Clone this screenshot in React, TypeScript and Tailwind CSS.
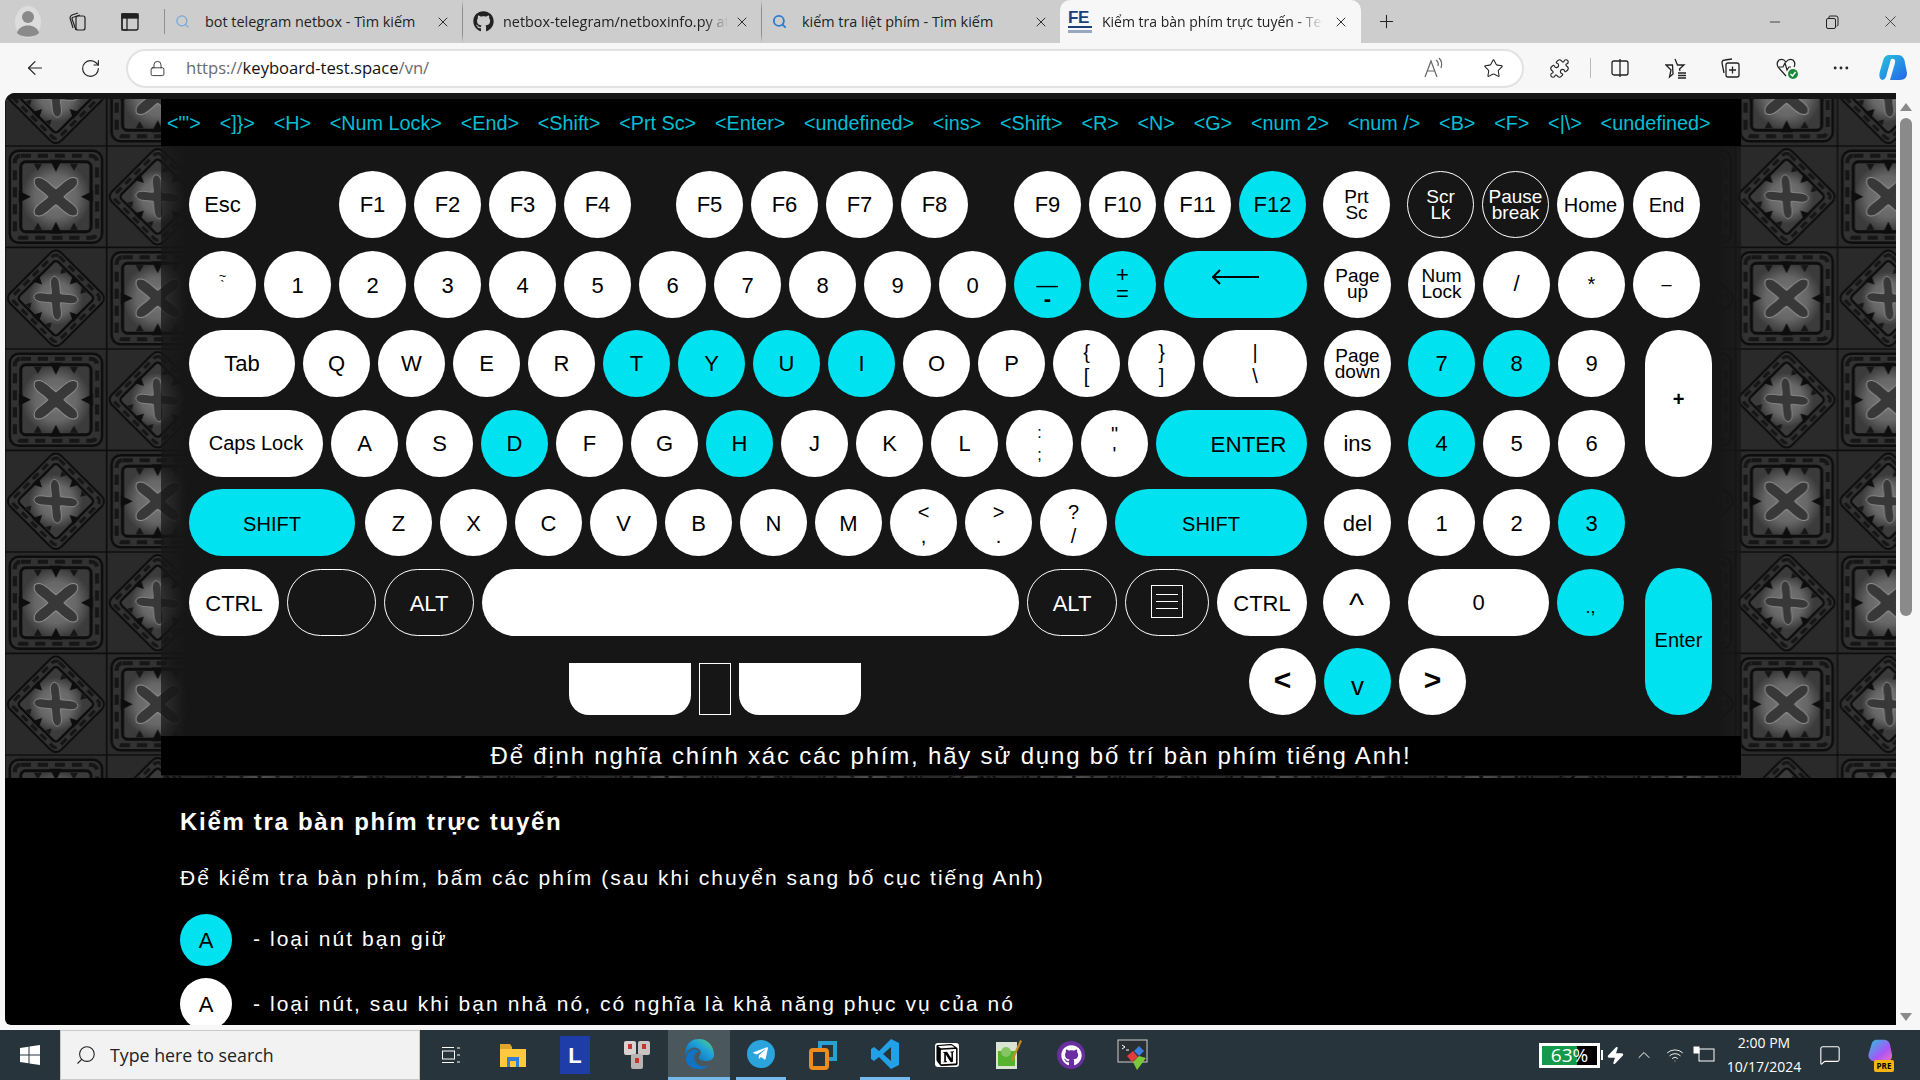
import { FC, ReactNode } from 'react'
import {
  ArrowLeft,
  RotateCw,
  Lock,
  Star,
  Puzzle,
  Plus,
  X,
  Minus,
  Search,
  Ellipsis,
  ChevronUp,
  Wifi,
  MessageSquare,
  Zap,
} from 'lucide-react'
import { FaGithub, FaTelegramPlane } from 'react-icons/fa'
import { SiNotion } from 'react-icons/si'

// key cap
const Key: FC<{
  children?: ReactNode
  w?: string
  h?: string
  on?: boolean
  line?: boolean
  text?: string
}> = ({ children, w = 'w-[67px]', h = 'h-[67px]', on, line, text = 'text-[22px]' }) => (
  <div
    className={`${w} ${h} shrink-0 rounded-[34px] flex items-center justify-center text-center ${text} leading-none ${
      line
        ? 'border border-white text-white'
        : on
          ? 'bg-[#00e2f0] text-black'
          : 'bg-white text-black'
    }`}
  >
    {children}
  </div>
)

// two symbols on one key
const Two: FC<{ a: string; b: string; gap?: string; text?: string }> = ({
  a,
  b,
  gap = 'leading-[24px]',
  text = 'text-[20px]',
}) => (
  <div className={`flex flex-col items-center ${gap} ${text}`}>
    <span>{a}</span>
    <span>{b}</span>
  </div>
)

// two-line word keys such as Page up
const Word: FC<{ a: string; b: string }> = ({ a, b }) => (
  <div className="flex flex-col items-center leading-[16px] text-[19px]">
    <span>{a}</span>
    <span>{b}</span>
  </div>
)

const Row: FC<{ children: ReactNode; className?: string }> = ({ children, className = '' }) => (
  <div className={`flex gap-[8px] h-[67px] ${className}`}>{children}</div>
)

const Gap: FC<{ w: string }> = ({ w }) => <div className={`${w} shrink-0`} />

const Plain: FC<{ labels: string[]; on?: string[] }> = ({ labels, on = [] }) => (
  <>
    {labels.map((l) => (
      <Key key={l} on={on.includes(l)}>
        {l}
      </Key>
    ))}
  </>
)

const logWords = [
  '<"\'>', '<]}>', '<H>', '<Num Lock>', '<End>', '<Shift>', '<Prt Sc>', '<Enter>', '<undefined>', '<ins>',
  '<Shift>', '<R>', '<N>', '<G>', '<num 2>', '<num />', '<B>', '<F>', '<|\\>', '<undefined>',
  '<Tab>', '<Tab>', '<l>', '<F>', '<Tab>', '<Tab>', '<Tab>', '<Shift>', '<N>', '<Tab>', '<Tab>', '<L>',
]

// tile drawn behind the keyboard
const Motif: FC<{ x: number; y: number; plus?: boolean }> = ({ x, y, plus }) => (
  <g transform={`translate(${x} ${y})`}>
    <rect x="-50.75" y="-50.75" width="101.5" height="101.5" fill="#2b2b2b" />
    <rect x="-50.75" y="-50.75" width="101.5" height="101.5" fill="none" stroke="#111" strokeWidth="1.5" />
    <g transform={plus ? 'rotate(45) scale(0.78)' : ''}>
      <rect x="-46" y="-46" width="92" height="92" rx="9" fill="#303030" stroke="#0e0e0e" strokeWidth="2.5" />
      <rect x="-41" y="-41" width="82" height="82" rx="6" fill="none" stroke="#151515" strokeWidth="4" strokeDasharray="10 7" />
      <rect x="-35" y="-35" width="70" height="70" rx="5" fill="url(#glow)" stroke="#0e0e0e" strokeWidth="3" />
      <path d="M-6,-37 L0,-25 L6,-37Z M-6,37 L0,25 L6,37Z M-37,-6 L-25,0 L-37,6Z M37,-6 L25,0 L37,6Z" fill="#0e0e0e" />
      <path d="M-22,-33 L-18,-26 L-14,-33Z M22,-33 L18,-26 L14,-33Z M-22,33 L-18,26 L-14,33Z M22,33 L18,26 L14,33Z" fill="#151515" />
    </g>
    <path
      d="M-21,-18 C-14,-23 -6,-12 0,-8 C6,-12 14,-23 21,-18 C25,-10 12,-5 8,0 C12,5 25,10 21,18 C14,23 6,12 0,8 C-6,12 -14,23 -21,18 C-25,10 -12,5 -8,0 C-12,-5 -25,-10 -21,-18Z"
      transform={plus ? 'rotate(45) scale(0.8)' : ''}
      fill="#373737"
      stroke="#8f8f8f"
      strokeWidth="1"
    />
  </g>
)

const Wallpaper: FC = () => (
  <svg className="w-full h-full [grid-area:1/1]" aria-hidden>
    <defs>
      <radialGradient id="glow">
        <stop offset="0" stopColor="#7a7a7a" />
        <stop offset="0.6" stopColor="#666" />
        <stop offset="1" stopColor="#3a3a3a" />
      </radialGradient>
      <filter id="soft">
        <feGaussianBlur stdDeviation="0.5" />
      </filter>
      <pattern id="tile" width="203" height="203" patternUnits="userSpaceOnUse" patternTransform="translate(0 47) scale(1.003 1)">
        <g filter="url(#soft)">
          <Motif x={50.75} y={50.75} />
          <Motif x={152.25} y={50.75} plus />
          <Motif x={50.75} y={152.25} plus />
          <Motif x={152.25} y={152.25} />
        </g>
      </pattern>
    </defs>
    <rect width="100%" height="100%" fill="url(#tile)" />
  </svg>
)

const Keyboard: FC = () => (
  <div className="flex pt-[25px] pl-[28px] pb-[22px] h-[591px]">
    <div className="flex flex-col gap-[12.5px] w-[1435px] shrink-0">
      <Row>
        <Key>Esc</Key>
        <Gap w="w-[67px]" />
        <Plain labels={['F1', 'F2', 'F3', 'F4']} />
        <Gap w="w-[29px]" />
        <Plain labels={['F5', 'F6', 'F7', 'F8']} />
        <Gap w="w-[30px]" />
        <Plain labels={['F9', 'F10', 'F11', 'F12']} on={['F12']} />
        <Gap w="w-px" />
        <Key><Word a="Prt" b="Sc" /></Key>
        <Gap w="w-px" />
        <Key line><Word a="Scr" b="Lk" /></Key>
        <Key line><Word a="Pause" b="break" /></Key>
        <Key text="text-[20px]">Home</Key>
      </Row>
      <Row>
        <Key><Two a="~" b="`" gap="leading-[10px] -mt-[6px]" text="text-[13px]" /></Key>
        <div className="flex gap-[8px] [&>div]:pt-[3px]">
          <Plain labels={['1', '2', '3', '4', '5', '6', '7', '8', '9', '0']} />
        </div>
        <Key on>
          <div className="flex flex-col items-center leading-[23px] pt-[6px] font-bold text-[22px]">
            <span className="scale-x-[1.7] font-normal">_</span>
            <span>-</span>
          </div>
        </Key>
        <Key on><Two a="+" b="=" gap="leading-[19px]" text="text-[22px]" /></Key>
        <Key w="w-[143px]" on>
          <svg width="48" height="16" viewBox="0 0 48 16" className="-mt-[14px]" fill="none" stroke="black" strokeWidth="2">
            <path d="M1 8 H47" />
            <path d="M8 1 L1 8 L8 15" />
          </svg>
        </Key>
        <Gap w="w-px" />
        <Key><Word a="Page" b="up" /></Key>
        <Gap w="w-px" />
        <Key><Word a="Num" b="Lock" /></Key>
        <Key text="text-[22px]">/</Key>
        <Key text="text-[20px]">*</Key>
      </Row>
      <Row>
        <Key w="w-[106px]">Tab</Key>
        <Plain labels={['Q', 'W', 'E', 'R', 'T', 'Y', 'U', 'I', 'O', 'P']} on={['T', 'Y', 'U', 'I']} />
        <Key><Two a="{" b="[" /></Key>
        <Key><Two a="}" b="]" /></Key>
        <Key w="w-[104px]"><Two a="|" b="\" /></Key>
        <Gap w="w-px" />
        <Key><Word a="Page" b="down" /></Key>
        <Gap w="w-px" />
        <Plain labels={['7', '8', '9']} on={['7', '8']} />
      </Row>
      <Row className="[&>div]:pt-[2px]">
        <Key w="w-[134px]" text="text-[20px]"><span className="-mt-[3px]">Caps Lock</span></Key>
        <Plain labels={['A', 'S', 'D', 'F', 'G', 'H', 'J', 'K', 'L']} on={['D', 'H']} />
        <Key><Two a=":" b=";" gap="leading-[22px]" text="text-[16px]" /></Key>
        <Key><Two a={'"'} b="'" gap="leading-[20px]" /></Key>
        <Key w="w-[151px]" on text="text-[22.4px]"><span className="pl-[34px] pt-[2px]">ENTER</span></Key>
        <Gap w="w-px" />
        <Key>ins</Key>
        <Gap w="w-px" />
        <Plain labels={['4', '5', '6']} on={['4']} />
      </Row>
      <Row className="[&>div]:pt-[2px]">
        <Key w="w-[166px]" on text="text-[20px]">SHIFT</Key>
        <div className="w-0 -ml-[6px]" />
        <Plain labels={['Z', 'X', 'C', 'V', 'B', 'N', 'M']} />
        <Key><Two a="<" b="," /></Key>
        <Key><Two a=">" b="." /></Key>
        <Key><Two a="?" b="/" /></Key>
        <Key w="w-[192px]" on text="text-[20px]">SHIFT</Key>
        <Gap w="w-px" />
        <Key>del</Key>
        <Gap w="w-px" />
        <Plain labels={['1', '2', '3']} on={['3']} />
      </Row>
      <Row>
        <Key w="w-[90px]"><span className="pt-[3px]">CTRL</span></Key>
        <Key w="w-[89px]" line />
        <Key w="w-[90px]" line><span className="pt-[3px]">ALT</span></Key>
        <Key w="w-[537px]" />
        <Key w="w-[90px]" line><span className="pt-[3px]">ALT</span></Key>
        <Key w="w-[84px]" line>
          <div className="w-[32px] h-[33px] border border-white flex flex-col justify-evenly px-[4px] py-[2px] -mt-[2px]">
            <div className="h-px bg-white" />
            <div className="h-px bg-white" />
            <div className="h-px bg-white" />
          </div>
        </Key>
        <Key w="w-[90px]"><span className="pt-[3px]">CTRL</span></Key>
        <Gap w="w-0" />
        <Key text="text-[32px]"><span className="pt-[4px]">^</span></Key>
        <Gap w="w-[2px]" />
        <Key w="w-[141px]"><span className="pt-[2px]">0</span></Key>
        <Key on text="text-[18px]"><span className="pt-[10px]">.,</span></Key>
      </Row>
      <div className="flex h-[67px] items-end">
        <div className="w-[122px] h-[52px] bg-white rounded-b-[20px] ml-[380px]" />
        <div className="w-[32px] h-[52px] border border-white ml-[8px]" />
        <div className="w-[122px] h-[52px] bg-white rounded-b-[20px] ml-[8px]" />
        <div className="flex gap-[8px] ml-[388px]">
          <Key text="text-[30px]"><span className="-mt-[4px] font-bold">&lt;</span></Key>
          <Key on text="text-[26px]"><span className="pt-[8px]">v</span></Key>
          <Key text="text-[30px]"><span className="-mt-[4px] font-bold">&gt;</span></Key>
        </div>
      </div>
    </div>
    <div className="flex flex-col gap-[12.5px] ml-[9px]">
      <Key text="text-[20px]">End</Key>
      <Key text="text-[18px]">–</Key>
      <div className="pl-[12px]">
        <Key h="h-[147px]" text="text-[20px]"><span className="-mt-[10px] font-bold">+</span></Key>
      </div>
      <div className="h-[67px]" />
      <div className="pl-[12px]">
        <Key h="h-[147px]" on text="text-[20px]"><span className="-mt-[4px]">Enter</span></Key>
      </div>
    </div>
  </div>
)

const TestPage: FC = () => (
  <div className="flex-1 min-w-0 bg-black rounded-tl-[10px] rounded-bl-[6px] overflow-hidden font-['Liberation_Sans',sans-serif]">
    <div className="h-[6px] bg-[#141414]" />
    <div className="grid h-[679px]">
      <Wallpaper />
      <div className="[grid-area:1/1] z-10 ml-[156px] w-[1580px] h-[677px] flex flex-col bg-[linear-gradient(to_right,rgba(22,22,22,0.72),#161616_26px,#161616_1554px,rgba(22,22,22,0.72))]">
        <div className="h-[47px] bg-black overflow-hidden px-[6px] pt-[13px] flex flex-wrap content-start gap-x-[18.75px] gap-y-[11px] text-[19.8px] leading-[22px] text-[#00bfd6]">
          {logWords.map((w, i) => (
            <span key={i}>{w}</span>
          ))}
        </div>
        <Keyboard />
        <div className="h-[39px] bg-black flex items-center justify-center text-white text-[24px] tracking-[1.8px] -mt-px">
          Để định nghĩa chính xác các phím, hãy sử dụng bố trí bàn phím tiếng Anh!
        </div>
      </div>
    </div>
    <div className="pl-[175px] text-white">
      <h2 className="text-[24px] font-bold tracking-[1.7px] leading-[26px] mt-[31px]">Kiểm tra bàn phím trực tuyến</h2>
      <p className="text-[21px] tracking-[2.03px] leading-[24px] mt-[31px]">
        Để kiểm tra bàn phím, bấm các phím (sau khi chuyển sang bố cục tiếng Anh)
      </p>
      <div className="flex items-center gap-[21px] mt-[24px]">
        <div className="w-[52px] h-[52px] rounded-full bg-[#00e2f0] text-black flex items-center justify-center text-[22px]">A</div>
        <span className="text-[21px] tracking-[2.05px] -mt-[2px]">- loại nút bạn giữ</span>
      </div>
      <div className="flex items-center gap-[21px] mt-[12px]">
        <div className="w-[52px] h-[52px] rounded-full bg-white text-black flex items-center justify-center text-[22px]">A</div>
        <span className="text-[21px] tracking-[2.05px]">- loại nút, sau khi bạn nhả nó, có nghĩa là khả năng phục vụ của nó</span>
      </div>
    </div>
  </div>
)

const Scrollbar: FC = () => (
  <div className="w-[24px] shrink-0 flex flex-col items-center pr-[5px] pt-[10px] gap-[4px]">
    <div className="w-0 h-0 border-x-[6px] border-x-transparent border-b-[8px] border-b-[#8a8a8a]" />
    <div className="w-[12px] h-[498px] rounded-[6px] bg-[#8a8a8a] mt-[3px]" />
    <div className="flex-1" />
    <div className="w-0 h-0 border-x-[6px] border-x-transparent border-t-[8px] border-t-[#8a8a8a] mb-[4px]" />
  </div>
)

const Tab: FC<{ icon: ReactNode; label: string; w: string; fade?: boolean }> = ({ icon, label, w, fade }) => (
  <div className={`${w} h-[43px] flex items-center border-r border-[#8f8f8f] border-y-[9px] border-y-[#cdcdcd] pl-[10px] pr-[11px] shrink-0`}>
    <div className="w-[24px] flex justify-start shrink-0">{icon}</div>
    <span className={`flex-1 min-w-0 pl-[6px] overflow-hidden whitespace-nowrap text-[14.4px] text-[#222] ${fade ? '[mask-image:linear-gradient(to_right,black_90%,transparent)]' : ''}`}>
      {label}
    </span>
    <X size={16} strokeWidth={1.4} className={`${fade ? 'ml-[6px]' : 'ml-[14px]'} shrink-0 text-[#222]`} />
  </div>
)

const TabStrip: FC = () => (
  <div className="h-[43px] bg-[#cdcdcd] flex items-center font-['Open_Sans',sans-serif]">
    <div className="w-[164px] flex items-center pl-[14px] shrink-0">
      <svg width="28" height="34" viewBox="0 0 28 34">
        <ellipse cx="14" cy="17" rx="13" ry="16" fill="#dcdcdc" />
        <circle cx="14" cy="12" r="6" fill="#8a8a8a" />
        <path d="M3 28 C5 18 23 18 25 28 C20 33 8 33 3 28Z" fill="#8a8a8a" />
      </svg>
      <svg width="20" height="22" viewBox="0 0 20 22" fill="none" stroke="#222" strokeWidth="1.2" className="ml-[25px]">
        <rect x="9" y="5" width="9" height="14" rx="2" />
        <path d="M6 17 L3 7 Q3 5 5 4 L11 2" />
        <path d="M9 19 L5 8 Q5 6 7 6 L13 4" />
      </svg>
      <svg width="20" height="20" viewBox="0 0 20 20" fill="none" stroke="#222" strokeWidth="1.3" className="ml-[33px]">
        <rect x="2" y="2" width="16" height="16" rx="2" />
        <rect x="2" y="2" width="16" height="4" fill="#222" />
        <rect x="2" y="2" width="5" height="16" fill="none" />
      </svg>
    </div>
    <div className="w-px h-[25px] bg-[#8f8f8f] shrink-0" />
    <Tab w="w-[298px]" label="bot telegram netbox - Tìm kiếm" icon={<Search size={15} className="text-[#74a9d8]" />} />
    <Tab w="w-[299px]" fade label="netbox-telegram/netboxinfo.py at main" icon={<FaGithub size={21} className="text-[#222]" />} />
    <div className="w-[298px] h-[43px] flex items-center pl-[10px] pr-[11px] shrink-0">
      <div className="w-[24px] shrink-0"><Search size={15} strokeWidth={3} className="text-[#2b7cd3]" /></div>
      <span className="flex-1 pl-[6px] text-[14.4px] text-[#222] whitespace-nowrap overflow-hidden">kiểm tra liệt phím - Tìm kiếm</span>
      <X size={16} strokeWidth={1.4} className="ml-[14px] shrink-0 text-[#222]" />
    </div>
    <div className="w-[301px] h-[43px] bg-[#f7f7f7] rounded-t-[10px] flex items-center pl-[8px] pr-[12px] shrink-0">
      <div className="w-[24px] shrink-0 flex flex-col text-[#1d3f7a] font-['Liberation_Sans',sans-serif]">
        <span className="text-[17px] font-bold leading-[15px] tracking-[-0.5px]">FE</span>
        <div className="h-[2px] bg-[#1d3f7a] mt-[1px]" />
        <div className="h-[3px] bg-[#9aa7c0] mt-[2px]" />
      </div>
      <span className="flex-1 min-w-0 pl-[10px] text-[14px] text-[#222] whitespace-nowrap overflow-hidden [mask-image:linear-gradient(to_right,black_88%,transparent)]">
        Kiểm tra bàn phím trực tuyến - Test
      </span>
      <X size={16} strokeWidth={1.4} className="ml-[10px] shrink-0 text-[#222]" />
    </div>
    <Plus size={21} strokeWidth={1.2} className="ml-[15px] text-[#222]" />
    <div className="flex-1" />
    <Minus size={16} strokeWidth={1.2} className="text-[#222]" />
    <svg width="14" height="14" viewBox="0 0 14 14" fill="none" stroke="#222" className="ml-[42px]">
      <rect x="1.5" y="3.5" width="9" height="10" rx="1.5" />
      <path d="M4 3 V2 Q4 1 5 1 H11 Q13 1 13 3 V10 Q13 11 11.5 11" />
    </svg>
    <X size={19} strokeWidth={1} className="ml-[42px] mr-[20px] text-[#222]" />
  </div>
)

const Toolbar: FC = () => (
  <div className="h-[50px] bg-[#f7f7f7] flex items-center font-['Open_Sans',sans-serif] text-[#222]">
    <ArrowLeft size={22} strokeWidth={1.3} className="ml-[24px]" />
    <RotateCw size={21} strokeWidth={1.3} className="ml-[34px]" />
    <div className="ml-[25px] w-[1398px] h-[39px] bg-white border-2 border-[#e2e2e2] rounded-[20px] flex items-center pl-[21px] pr-[18px]">
      <Lock size={17} strokeWidth={1.2} />
      <span className="ml-[20px] text-[16.6px] text-[#6a6a6a]">
        https://<span className="text-[#111]">keyboard-test.space</span>/vn/
      </span>
      <div className="flex-1" />
      <svg width="22" height="22" viewBox="0 0 22 22" fill="none" stroke="#666" strokeWidth="1.2" className="mr-[38px]">
        <path d="M2 20 L8 4 L14 20 M4.5 14 H11.5" />
        <path d="M13 3 Q16 5 15 9 M16 1 Q20 5 18 11" />
      </svg>
      <Star size={21} strokeWidth={1.2} />
    </div>
    <Puzzle size={21} strokeWidth={1.3} className="ml-[25px]" />
    <div className="w-px h-[20px] bg-[#bbb] ml-[20px]" />
    <svg width="20" height="20" viewBox="0 0 20 20" fill="none" stroke="#222" strokeWidth="1.3" className="ml-[19px]">
      <rect x="2" y="3" width="16" height="14" rx="2" />
      <path d="M10 1 V19" />
    </svg>
    <svg width="22" height="22" viewBox="0 0 22 22" fill="none" stroke="#222" strokeWidth="1.3" className="ml-[35px]">
      <path d="M10 2 L12.5 8 H19 L14.5 12 L15 14 M8 17 L4.5 20 L6 13 L1 8 H7.5Z" />
      <path d="M13 16 H21 M13 18.5 H21 M13 21 H21" />
    </svg>
    <svg width="22" height="22" viewBox="0 0 22 22" fill="none" stroke="#222" strokeWidth="1.3" className="ml-[33px]">
      <rect x="6" y="6" width="13" height="14" rx="2" />
      <path d="M4 16 L2 6 Q2 3 5 3 L12 2 M9 13 H16 M12.5 9.5 V16.5" />
    </svg>
    <svg width="24" height="24" viewBox="0 0 24 24" fill="none" stroke="#222" strokeWidth="1.2" className="ml-[33px]">
      <path d="M11 20 L3 11 Q1 7 4 4 Q8 2 11 6 Q14 2 18 4 Q21 7 19 11" />
      <path d="M4 11 H8 L10 7 L12 14 L14 11 H16" />
      <circle cx="18" cy="18" r="5" fill="#1a8a3a" stroke="none" />
      <path d="M15.5 18 L17.5 20 L20.5 16" stroke="white" strokeWidth="1.4" />
    </svg>
    <Ellipsis size={20} strokeWidth={1.5} className="ml-[32px]" />
    <svg width="30" height="30" viewBox="0 0 30 30" className="ml-[27px]">
      <defs>
        <linearGradient id="cp" x1="0" y1="0" x2="1" y2="1">
          <stop offset="0" stopColor="#26c6da" />
          <stop offset="1" stopColor="#2563eb" />
        </linearGradient>
      </defs>
      <path d="M10 2 H20 Q26 2 27 10 L29 20 Q29 27 22 27 H12 L17 10 Q18 5 13 6 L9 20 Q8 27 4 27 Q0 25 2 18 L5 8 Q6 3 10 2Z" fill="url(#cp)" />
    </svg>
  </div>
)

// taskbar app button
const Slot: FC<{ children: ReactNode; active?: boolean; open?: boolean }> = ({ children, active, open }) => (
  <div className={`w-[62px] h-[50px] shrink-0 flex justify-center ${active ? 'bg-[#4a585e]' : ''}`}>
    <div className={`${active ? 'w-[62px]' : 'w-[50px]'} h-[50px] flex items-center justify-center ${open || active ? 'border-b-[3px] border-[#76b9ed]' : ''}`}>
      {children}
    </div>
  </div>
)

const Taskbar: FC = () => (
  <div className="h-[50px] bg-[#27343b] flex items-center text-white font-['Open_Sans',sans-serif] shrink-0">
    <div className="w-[60px] flex justify-center shrink-0">
      <svg width="20" height="20" viewBox="0 0 20 20" fill="white">
        <path d="M0 3 L8.5 1.7 V9.5 H0Z M9.5 1.5 L20 0 V9.5 H9.5Z M0 10.5 H8.5 V18.3 L0 17Z M9.5 10.5 H20 V20 L9.5 18.5Z" />
      </svg>
    </div>
    <div className="w-[360px] h-[50px] bg-[#f2f2f2] border border-[#c9c9c9] flex items-center pl-[14px] text-[#222] shrink-0">
      <Search size={22} strokeWidth={1.2} className="-scale-x-100" />
      <span className="ml-[13px] text-[17.8px]">Type here to search</span>
    </div>
    <Slot>
      <svg width="20" height="20" viewBox="0 0 20 20" fill="none" stroke="white">
        <path d="M1 2.5 H13 M1 17.5 H13 M16 3 H19 M16 10 H19 M16 17 H19" />
        <rect x="1.5" y="6" width="12" height="8" />
      </svg>
    </Slot>
    <Slot>
      <svg width="28" height="28" viewBox="0 0 28 28">
        <path d="M1 3 H11 L13 6 V12 H1Z" fill="#e2a52c" />
        <rect x="1" y="8" width="26" height="18" fill="#ffc83d" />
        <rect x="8" y="16" width="12" height="10" fill="#2f7fd6" />
        <rect x="11" y="20" width="6" height="6" fill="#ffc83d" />
      </svg>
    </Slot>
    <Slot>
      <div className="w-[30px] h-[38px] bg-[#1f3da8] flex items-center justify-center font-bold text-[22px] font-['Liberation_Sans',sans-serif]">L</div>
    </Slot>
    <Slot>
      <svg width="28" height="32" viewBox="0 0 28 32">
        <rect x="1" y="2" width="12" height="14" rx="2" fill="#d8d2d2" />
        <rect x="15" y="2" width="12" height="14" rx="2" fill="#c9c3c3" />
        <rect x="8" y="15" width="12" height="15" rx="2" fill="#b9b3b3" />
        <rect x="5" y="5" width="4" height="5" fill="#c0392b" />
        <rect x="19" y="5" width="4" height="5" fill="#c0392b" />
        <rect x="12" y="19" width="4" height="5" fill="#c0392b" />
      </svg>
    </Slot>
    <Slot active>
      <svg width="32" height="32" viewBox="0 0 32 32">
        <defs>
          <linearGradient id="edge" x1="0" y1="1" x2="1" y2="0">
            <stop offset="0" stopColor="#0c59a4" />
            <stop offset="0.6" stopColor="#1fa2dc" />
            <stop offset="1" stopColor="#5bd36c" />
          </linearGradient>
        </defs>
        <path d="M16 1 C25 1 31 8 31 17 C31 22 26 23 22 23 C17 23 14 20 17 17 C20 13 14 8 9 10 C4 12 2 17 3 22 C0 15 3 1 16 1Z" fill="url(#edge)" />
        <path d="M3 22 C3 12 13 8 16 14 C12 14 10 18 12 23 C14 28 21 30 26 27 C22 32 14 32 10 30 C6 28 3 25 3 22Z" fill="#1272c4" />
      </svg>
    </Slot>
    <Slot open>
      <div className="w-[28px] h-[28px] rounded-full bg-[#2ba3dc] flex items-center justify-center">
        <FaTelegramPlane size={17} className="text-white -ml-px" />
      </div>
    </Slot>
    <Slot>
      <svg width="30" height="32" viewBox="0 0 30 32" fill="none" strokeWidth="4">
        <path d="M12 10 V4 H27 V20 H20" stroke="#2a9fd6" />
        <rect x="3" y="11" width="16" height="18" rx="2" stroke="#f08a1d" />
      </svg>
    </Slot>
    <Slot open>
      <svg width="30" height="32" viewBox="0 0 30 32">
        <path d="M21 1 L29 5 V27 L21 31 L9 19 L4 23 L1 21 V11 L4 9 L9 13Z M21 9 L13 16 L21 23Z" fill="#22a0e8" fillRule="evenodd" />
      </svg>
    </Slot>
    <Slot>
      <div className="w-[24px] h-[24px] bg-white rounded-[3px] flex items-center justify-center">
        <SiNotion size={22} className="text-black" />
      </div>
    </Slot>
    <Slot>
      <svg width="28" height="32" viewBox="0 0 28 32">
        <rect x="1" y="3" width="21" height="27" fill="#d9e4d3" />
        <rect x="3" y="12" width="17" height="15" fill="#56b32e" />
        <circle cx="11" cy="13" r="5" fill="#87c463" />
        <path d="M25 1 L27 2 L18 22 L16 21Z" fill="#c98b24" />
      </svg>
    </Slot>
    <Slot>
      <div className="w-[28px] h-[28px] rounded-full bg-[#6a2ea0] flex items-center justify-center">
        <FaGithub size={21} className="text-white" />
      </div>
    </Slot>
    <Slot>
      <svg width="32" height="32" viewBox="0 0 32 32">
        <rect x="1" y="1" width="29" height="22" fill="#2a2f33" stroke="#cfcfcf" />
        <path d="M5 6 L8 8 L5 10 M9 11 H12" stroke="white" fill="none" />
        <path d="M10 17 L16 12 L21 18 L15 23Z" fill="#e23b3b" />
        <path d="M17 12 L22 7 L27 12 L22 17Z" fill="#3b7ee2" />
        <path d="M16 23 L22 17 L29 19 L20 31Z" fill="#7ac93b" />
      </svg>
    </Slot>
    <div className="flex-1" />
    <div className="w-[61px] h-[25px] border-[3px] border-white flex relative text-[19px] leading-[19px]">
      <div className="w-[35px] bg-[#12994a]" />
      <div className="flex-1 bg-black" />
      <span className="absolute inset-0 text-center">63%</span>
    </div>
    <div className="w-[2px] h-[10px] bg-white ml-[1px]" />
    <Zap size={19} strokeWidth={1.5} className="ml-[3px] fill-white" />
    <ChevronUp size={20} strokeWidth={1.2} className="ml-[9px]" />
    <Wifi size={18} strokeWidth={1.2} className="ml-[12px]" />
    <svg width="22" height="18" viewBox="0 0 22 18" fill="none" stroke="white" className="ml-[9px]">
      <rect x="6" y="3" width="15" height="12" />
      <rect x="1" y="1" width="5" height="6" fill="white" />
    </svg>
    <div className="w-[86px] ml-[6px] text-center text-[14px] leading-[24px] shrink-0">
      <div>2:00 PM</div>
      <div>10/17/2024</div>
    </div>
    <MessageSquare size={22} strokeWidth={1.2} className="ml-[12px]" />
    <div className="ml-[25px] mr-[26px] relative w-[28px] h-[34px]">
      <svg width="28" height="26" viewBox="0 0 30 30">
        <defs>
          <linearGradient id="cp2" x1="0" y1="0" x2="1" y2="1">
            <stop offset="0" stopColor="#26c6da" />
            <stop offset="0.6" stopColor="#a855f7" />
            <stop offset="1" stopColor="#f472b6" />
          </linearGradient>
        </defs>
        <path d="M10 2 H20 Q26 2 27 10 L29 20 Q29 27 22 27 H8 Q0 25 2 18 L5 8 Q6 3 10 2Z" fill="url(#cp2)" />
      </svg>
      <div className="absolute bottom-0 right-0 w-[20px] h-[12px] bg-[#f5b50a] rounded-[2px] text-black text-[8px] font-bold leading-[12px] text-center">PRE</div>
    </div>
  </div>
)

export default function App() {
  return (
    <div className="w-[1920px] h-[1080px] flex flex-col overflow-hidden bg-[#f7f7f7]">
      <TabStrip />
      <Toolbar />
      <div className="flex-1 min-h-0 flex pl-[5px] pb-[5px]">
        <TestPage />
        <Scrollbar />
      </div>
      <Taskbar />
    </div>
  )
}
